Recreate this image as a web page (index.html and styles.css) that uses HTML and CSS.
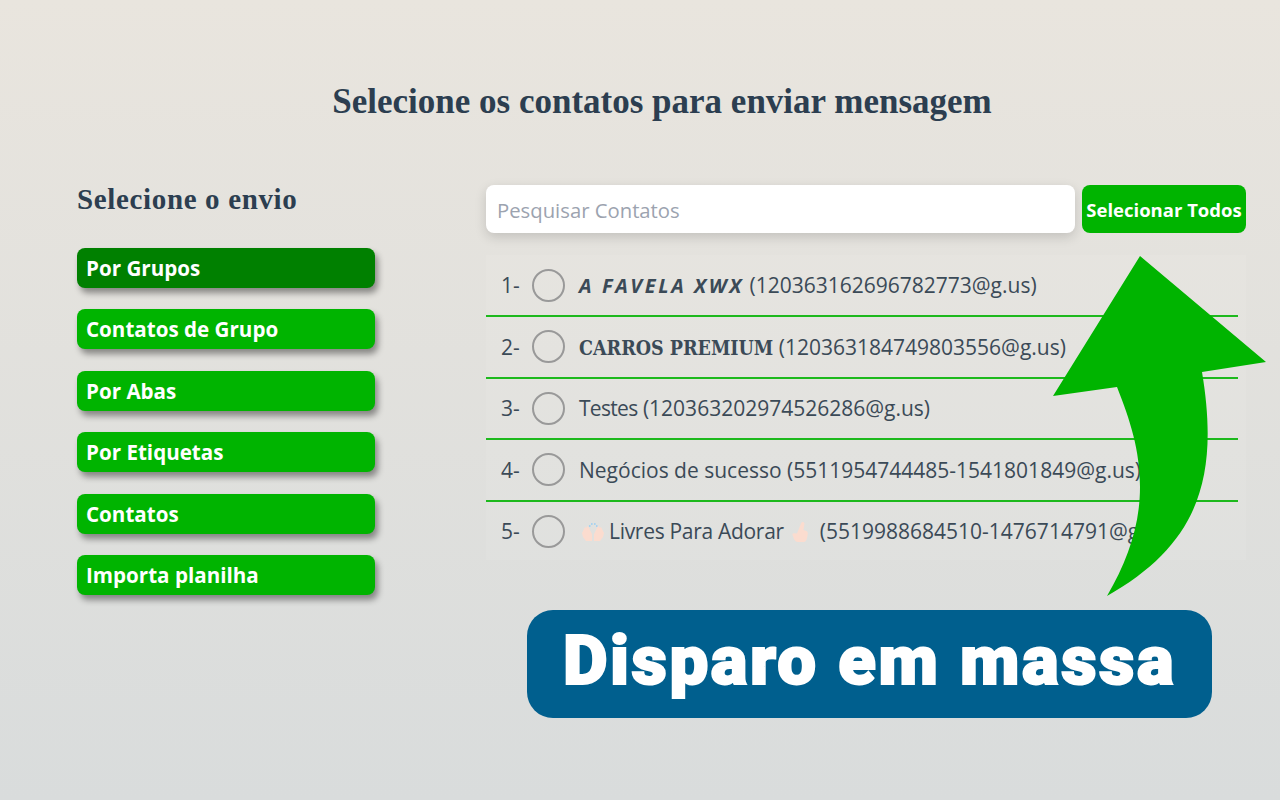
FILE: index.html
```html
<!DOCTYPE html>
<html lang="pt-BR">
<head>
    <meta charset="UTF-8">
    <meta name="viewport" content="width=device-width, initial-scale=1.0">
    <title>Disparo em massa</title>
    <link rel="stylesheet" href="styles.css">
</head>
<body>
    <h1 class="title">Selecione os contatos para enviar mensagem</h1>
    <div class="main">
        <div class="sidebar">
            <h2 class="sidebar-title">Selecione o envio</h2>
            <div class="menu">
                <button class="menu-btn active">Por Grupos</button>
                <button class="menu-btn">Contatos de Grupo</button>
                <button class="menu-btn">Por Abas</button>
                <button class="menu-btn">Por Etiquetas</button>
                <button class="menu-btn">Contatos</button>
                <button class="menu-btn">Importa planilha</button>
            </div>
        </div>
        <div class="content">
            <div class="search-row">
                <input class="search" type="text" placeholder="Pesquisar Contatos">
                <button class="select-all">Selecionar Todos</button>
            </div>
            <div class="list">
                <div class="row"><span class="num">1-</span><span class="radio"></span><span class="name"><b class="fancy-italic">A FAVELA XWX</b> (120363162696782773@g.us)</span></div>
                <div class="row"><span class="num">2-</span><span class="radio"></span><span class="name"><b class="fancy-serif">CARROS PREMIUM</b> (120363184749803556@g.us)</span></div>
                <div class="row"><span class="num">3-</span><span class="radio"></span><span class="name"><span class="tighter">Testes</span> (120363202974526286@g.us)</span></div>
                <div class="row"><span class="num">4-</span><span class="radio"></span><span class="name">Negócios de sucesso (5511954744485-1541801849@g.us)</span></div>
                <div class="row last"><span class="num">5-</span><span class="radio"></span><span class="name"><svg class="emoji hands" viewBox="0 0 24 20"><path fill="#a9d3ef" d="M10 1h1.600v2H10zM13 1h1.600v2H13zM8 3h1.500v2H8zM15 3h1.500v2H15z"/><path fill="#fbdccf" d="M1 11l3-6 1.500 1L6 4l1.500 1L11 12v7H5l-3-4zM23 11l-3-6-1.500 1L18 4l-1.500 1L13 12v7h6l3-4z"/></svg><span class="tight">Livres Para Adorar</span><svg class="emoji finger" viewBox="0 0 20 20"><path fill="#fbdccf" d="M13 0c1 0 1.600 1 1.400 2l-1 6 3 1c1 .5 1.600 1.500 1.400 3l-.8 4c-.3 2-1.500 4-3.500 4H8c-2 0-3.500-1.500-4-3l-1.500-4c-.3-1 .5-2 1.500-1.800l3 .3 4-10c.3-1 1-1.500 2-1.500z"/></svg>(5519988684510-1476714791@g.us)</span></div>
            </div>
        </div>
    </div>
    <svg class="arrow" viewBox="0 0 1280 800"><path fill="#00b400" d="M1140 256L1266 362L1202 372C1220 480 1197 545 1107 596C1128 560 1140 525 1140 487C1140 450 1130 420 1117 387L1053 396Z"/></svg>
    <div class="banner">Disparo em massa</div>
</body>
</html>
```

FILE: styles.css
```css
html {
    height: 100%;
}
body {
    margin: 0;
    height: 800px;
    overflow: hidden;
    font-family: "Open Sans", sans-serif;
    color: #3b4a57;
    background: linear-gradient(#e9e5de, #d9dcdc);
}
.title {
    margin: 0;
    padding-top: 82px;
    padding-left: 44px;
    font-family: "Liberation Serif", serif;
    font-size: 35px;
    line-height: 40px;
    font-weight: bold;
    text-align: center;
    color: #2c3e50;
}
.main {
    display: flex;
    padding: 63px 34px 0 77px;
}
.sidebar {
    width: 298px;
    margin-right: 111px;
}
.sidebar-title {
    margin: -2px 0 32px;
    font-family: "Liberation Serif", serif;
    font-size: 29px;
    line-height: 33px;
    letter-spacing: 0.65px;
    color: #2c3e50;
}
.menu {
    display: flex;
    flex-direction: column;
    gap: 21.400px;
}
.menu-btn {
    height: 40px;
    padding: 0 9px;
    border: none;
    border-radius: 8px;
    background-color: #00b400;
    color: #fff;
    font-family: "Open Sans", sans-serif;
    font-size: 20.600px;
    font-weight: 700;
    text-align: left;
    box-shadow: 3px 5px 6px rgba(0, 0, 0, 0.4);
}
.menu-btn.active {
    background-color: #008000;
}
.content {
    flex: 1;
}
.search-row {
    display: flex;
    gap: 7px;
}
.search {
    flex: 1;
    min-width: 0;
    height: 48px;
    box-sizing: border-box;
    padding: 2px 11px 0;
    border: none;
    border-radius: 8px;
    background-color: #fff;
    font-family: "Open Sans", sans-serif;
    font-size: 20.300px;
    box-shadow: 0 4px 12px rgba(0, 0, 0, 0.15);
}
.search::placeholder {
    color: #9ca3af;
}
.select-all {
    width: 164px;
    height: 48px;
    padding: 0;
    border: none;
    border-radius: 8px;
    background-color: #00b400;
    color: #fff;
    font-family: "Open Sans", sans-serif;
    font-size: 18.500px;
    font-weight: 700;
}
.list {
    margin-top: 22px;
    height: 305px;
    padding-right: 8px;
    background-color: rgba(255, 255, 255, 0.08);
    overflow: hidden;
}
.row {
    display: flex;
    align-items: center;
    height: 60px;
    border-bottom: 2px solid #1db91d;
    padding-left: 15px;
    font-size: 21px;
    white-space: nowrap;
    margin-bottom: -0.500px;
}
.row.last {
    border-bottom: none;
}
.num {
    width: 31px;
    flex-shrink: 0;
}
.radio {
    width: 33px;
    height: 33px;
    box-sizing: border-box;
    flex-shrink: 0;
    border: 2px solid #999;
    border-radius: 50%;
    margin-right: 14px;
}
.fancy-italic {
    font-style: italic;
    letter-spacing: 2.600px;
    font-size: 20px;
}
.fancy-serif {
    font-family: "DejaVu Serif Condensed", "DejaVu Serif", serif;
    font-size: 19.500px;
}
.tight {
    letter-spacing: -0.300px;
}
.tighter {
    letter-spacing: -0.700px;
}
.emoji {
    height: 20px;
    vertical-align: -3px;
}
.hands {
    width: 24px;
    margin: 0 4px 0 2px;
}
.finger {
    width: 20px;
    margin: 0 10px 0 6px;
}
.arrow {
    position: absolute;
    left: 0;
    top: 0;
    width: 1280px;
    height: 800px;
}
.banner {
    position: absolute;
    left: 527px;
    top: 610px;
    width: 685px;
    height: 108px;
    border-radius: 26px;
    background-color: #005f8e;
    color: #fff;
    font-family: Roboto, sans-serif;
    font-size: 69px;
    font-weight: 900;
    line-height: 101px;
    letter-spacing: 2.500px;
    text-align: center;
    -webkit-text-stroke: 2px #fff;
}
```
